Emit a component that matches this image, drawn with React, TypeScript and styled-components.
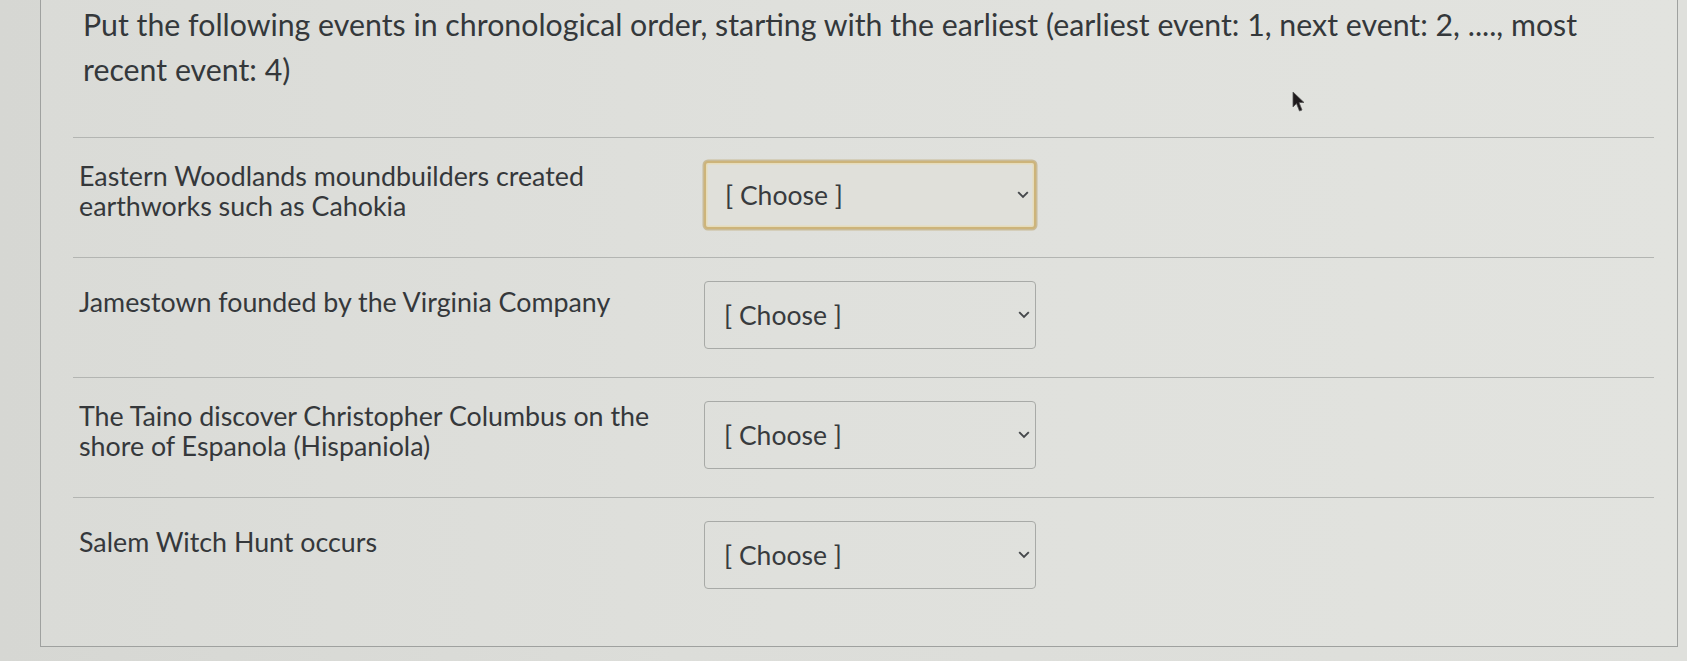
import React from "react";
import styled, { createGlobalStyle } from "styled-components";

const GlobalStyle = createGlobalStyle`
  html, body {
    margin: 0;
    padding: 0;
    background: #d9dad6;
    font-family: Lato, "Open Sans", "Liberation Sans", sans-serif;
  }
  * { box-sizing: border-box; }
`;

const Page = styled.div`
  width: 1687px;
  height: 661px;
  overflow: hidden;
  padding-left: 40px;
  padding-right: 9px;
  background: linear-gradient(90deg, #d6d7d3 0%, #dcddd9 40%, #dfe0dc 100%);
`;

const Panel = styled.div`
  position: relative;
  border: 1px solid #9fa19f;
  border-top: none;
  background: linear-gradient(90deg, #dadbd7 0%, #dfe0dc 45%, #e2e3df 100%);
  padding: 2px 23px 29px 32px;
`;

const Heading = styled.p`
  margin: 0 0 45px 0;
  padding-left: 10px;
  font-size: 30.3px;
  line-height: 45px;
  color: #34383b;
  font-weight: 400;
`;

const Row = styled.div`
  display: grid;
  grid-template-columns: 600px 332px;
  column-gap: 25px;
  align-items: start;
  height: 120px;
  border-top: 1.5px solid #b3b5b2;
  padding: 23px 0 0 6px;
`;

const Label = styled.div<{ $offset: number }>`
  padding-top: ${(p) => p.$offset}px;
  font-size: 26.8px;
  line-height: 30px;
  color: #35383b;
`;

const SelectBox = styled.div<{ $focused?: boolean }>`
  height: 68px;
  display: flex;
  align-items: center;
  justify-content: space-between;
  padding: 0 5px 0 19px;
  border-radius: 4px;
  font-size: 26.5px;
  color: #383b3e;
  border: ${(p) => (p.$focused ? "2px solid #cdb47a" : "1.5px solid #a8aaa7")};
  box-shadow: ${(p) =>
    p.$focused
      ? "0 0 0 1.5px #c9bb98, inset 0 0 0 1.5px #e6dcba"
      : "none"};
  background: ${(p) => (p.$focused ? "#e0e0da" : "transparent")};
`;

const Chevron = styled.svg`
  width: 12px;
  height: 8px;
  flex: none;
`;

const Cursor = styled.svg`
  position: absolute;
  left: 1251px;
  top: 91px;
  width: 14px;
  height: 22px;
`;

const events = [
  { text: "Eastern Woodlands moundbuilders created earthworks such as Cahokia", offset: 0, focused: true },
  { text: "Jamestown founded by the Virginia Company", offset: 6, focused: false },
  { text: "The Taino discover Christopher Columbus on the shore of Espanola (Hispaniola)", offset: 0, focused: false },
  { text: "Salem Witch Hunt occurs", offset: 6, focused: false },
];

export default function App() {
  return (
    <>
      <GlobalStyle />
      <Page>
        <Panel>
          <Heading>
            Put the following events in chronological order, starting with the earliest (earliest event: 1, next event: 2, ...., most recent event: 4)
          </Heading>
          {events.map((e) => (
            <Row key={e.text}>
              <Label $offset={e.offset}>{e.text}</Label>
              <SelectBox $focused={e.focused}>
                <span>[ Choose ]</span>
                <Chevron viewBox="0 0 12 8">
                  <path d="M1.2 1.2 L6 6 L10.8 1.2" fill="none" stroke="#45484b" strokeWidth="1.9" />
                </Chevron>
              </SelectBox>
            </Row>
          ))}
          <Cursor viewBox="0 0 14 22">
            <path d="M1 1 L1 16 L4.5 12.5 L7.5 20 L10 19 L7 11.5 L12 11.5 Z" fill="#1e1a1c" stroke="#555" strokeWidth="0.8" />
          </Cursor>
        </Panel>
      </Page>
    </>
  );
}
